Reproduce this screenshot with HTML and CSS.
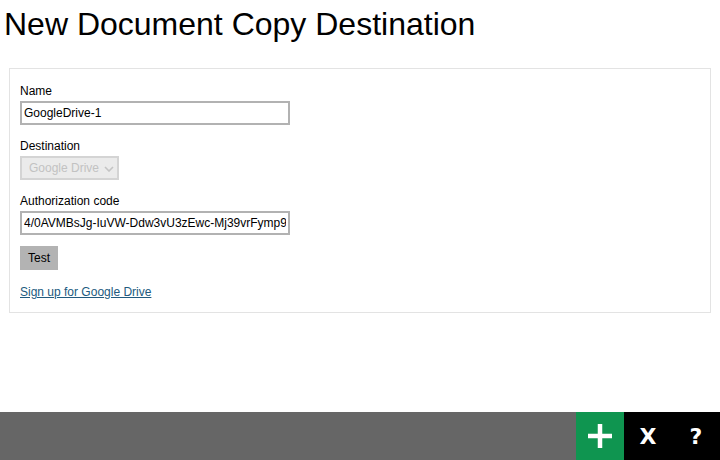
FILE: index.html
```html
<!DOCTYPE html>
<html>
<head>
<meta charset="utf-8">
<link rel="stylesheet" href="styles.css">
</head>
<body>
<div class="page">
  <main class="main">
    <h1 class="title">New Document Copy Destination</h1>
    <section class="panel">
      <div class="field">
        <label class="label">Name</label>
        <input class="text-input" type="text" value="GoogleDrive-1">
      </div>
      <div class="field">
        <label class="label">Destination</label>
        <span class="select-wrap">
          <select class="select" disabled><option>Google Drive</option></select>
          <svg class="chevron" width="10" height="6" viewBox="0 0 10 6"><path d="M1 1 L5 5 L9 1" fill="none" stroke="#c4c4c4" stroke-width="1.6"/></svg>
        </span>
      </div>
      <div class="field">
        <label class="label">Authorization code</label>
        <input class="text-input" type="text" value="4/0AVMBsJg-IuVW-Ddw3vU3zEwc-Mj39vrFymp9fQx">
      </div>
      <button class="btn-test">Test</button>
      <a class="link" href="#">Sign up for Google Drive</a>
    </section>
  </main>
  <footer class="bar">
    <button class="bar-btn add" aria-label="Add">
      <svg width="26" height="26" viewBox="0 0 26 26"><path d="M13 1 V25 M1 13 H25" stroke="#fff" stroke-width="4.5"/></svg>
    </button>
    <button class="bar-btn dark">X</button>
    <button class="bar-btn dark">?</button>
  </footer>
</div>
</body>
</html>
```

FILE: styles.css
```css
html, body {
  margin: 0;
  padding: 0;
  background: #fff;
}
.page {
  width: 720px;
  height: 460px;
  display: flex;
  flex-direction: column;
  font-family: "Liberation Sans", Arial, sans-serif;
  color: #000;
}
.main {
  flex: 1;
  display: flex;
  flex-direction: column;
}
.title {
  margin: 6px 0 0 4px;
  font-size: 32px;
  line-height: 36px;
  font-weight: normal;
}
.panel {
  margin: 26px 9px 0 9px;
  border: 1px solid #e3e3e3;
  padding: 14px 10px 12px 10px;
  display: flex;
  flex-direction: column;
  align-items: flex-start;
}
.field {
  display: flex;
  flex-direction: column;
  align-items: flex-start;
  margin-bottom: 13px;
}
.field:nth-child(3) {
  margin-bottom: 11px;
}
.label {
  font-size: 12px;
  line-height: 16px;
  margin-bottom: 2px;
}
.text-input {
  box-sizing: border-box;
  width: 270px;
  height: 24px;
  border: 2px solid #b2b2b2;
  padding: 0 2px;
  font-family: "Liberation Sans", Arial, sans-serif;
  font-size: 12px;
  color: #000;
  outline: none;
  margin: 0;
}
.select-wrap {
  position: relative;
  display: inline-block;
}
.select {
  appearance: none;
  -webkit-appearance: none;
  box-sizing: border-box;
  width: 99px;
  height: 24px;
  border: 2px solid #d4d4d4;
  background: #ebebeb;
  color: #c2c2c2;
  font-family: "Liberation Sans", Arial, sans-serif;
  font-size: 12px;
  padding: 0 0 0 7px;
  margin: 0;
  opacity: 1;
}
.chevron {
  position: absolute;
  right: 5px;
  top: 10px;
}
.btn-test {
  box-sizing: border-box;
  height: 24px;
  padding: 0 8px;
  border: none;
  background: #b3b3b3;
  font-family: "Liberation Sans", Arial, sans-serif;
  font-size: 12px;
  color: #000;
  margin: 0 0 14px 0;
}
.link {
  font-size: 12px;
  line-height: 16px;
  color: #215a7e;
  text-decoration: underline;
}
.bar {
  height: 48px;
  background: #666666;
  display: flex;
  justify-content: flex-end;
}
.bar-btn {
  width: 48px;
  height: 48px;
  border: none;
  padding: 0;
  margin: 0;
  display: flex;
  align-items: center;
  justify-content: center;
  color: #fff;
  font-family: "DejaVu Sans", sans-serif;
  font-weight: bold;
  font-size: 22px;
}
.add {
  background: #0f9550;
}
.dark {
  background: #000;
}
```
